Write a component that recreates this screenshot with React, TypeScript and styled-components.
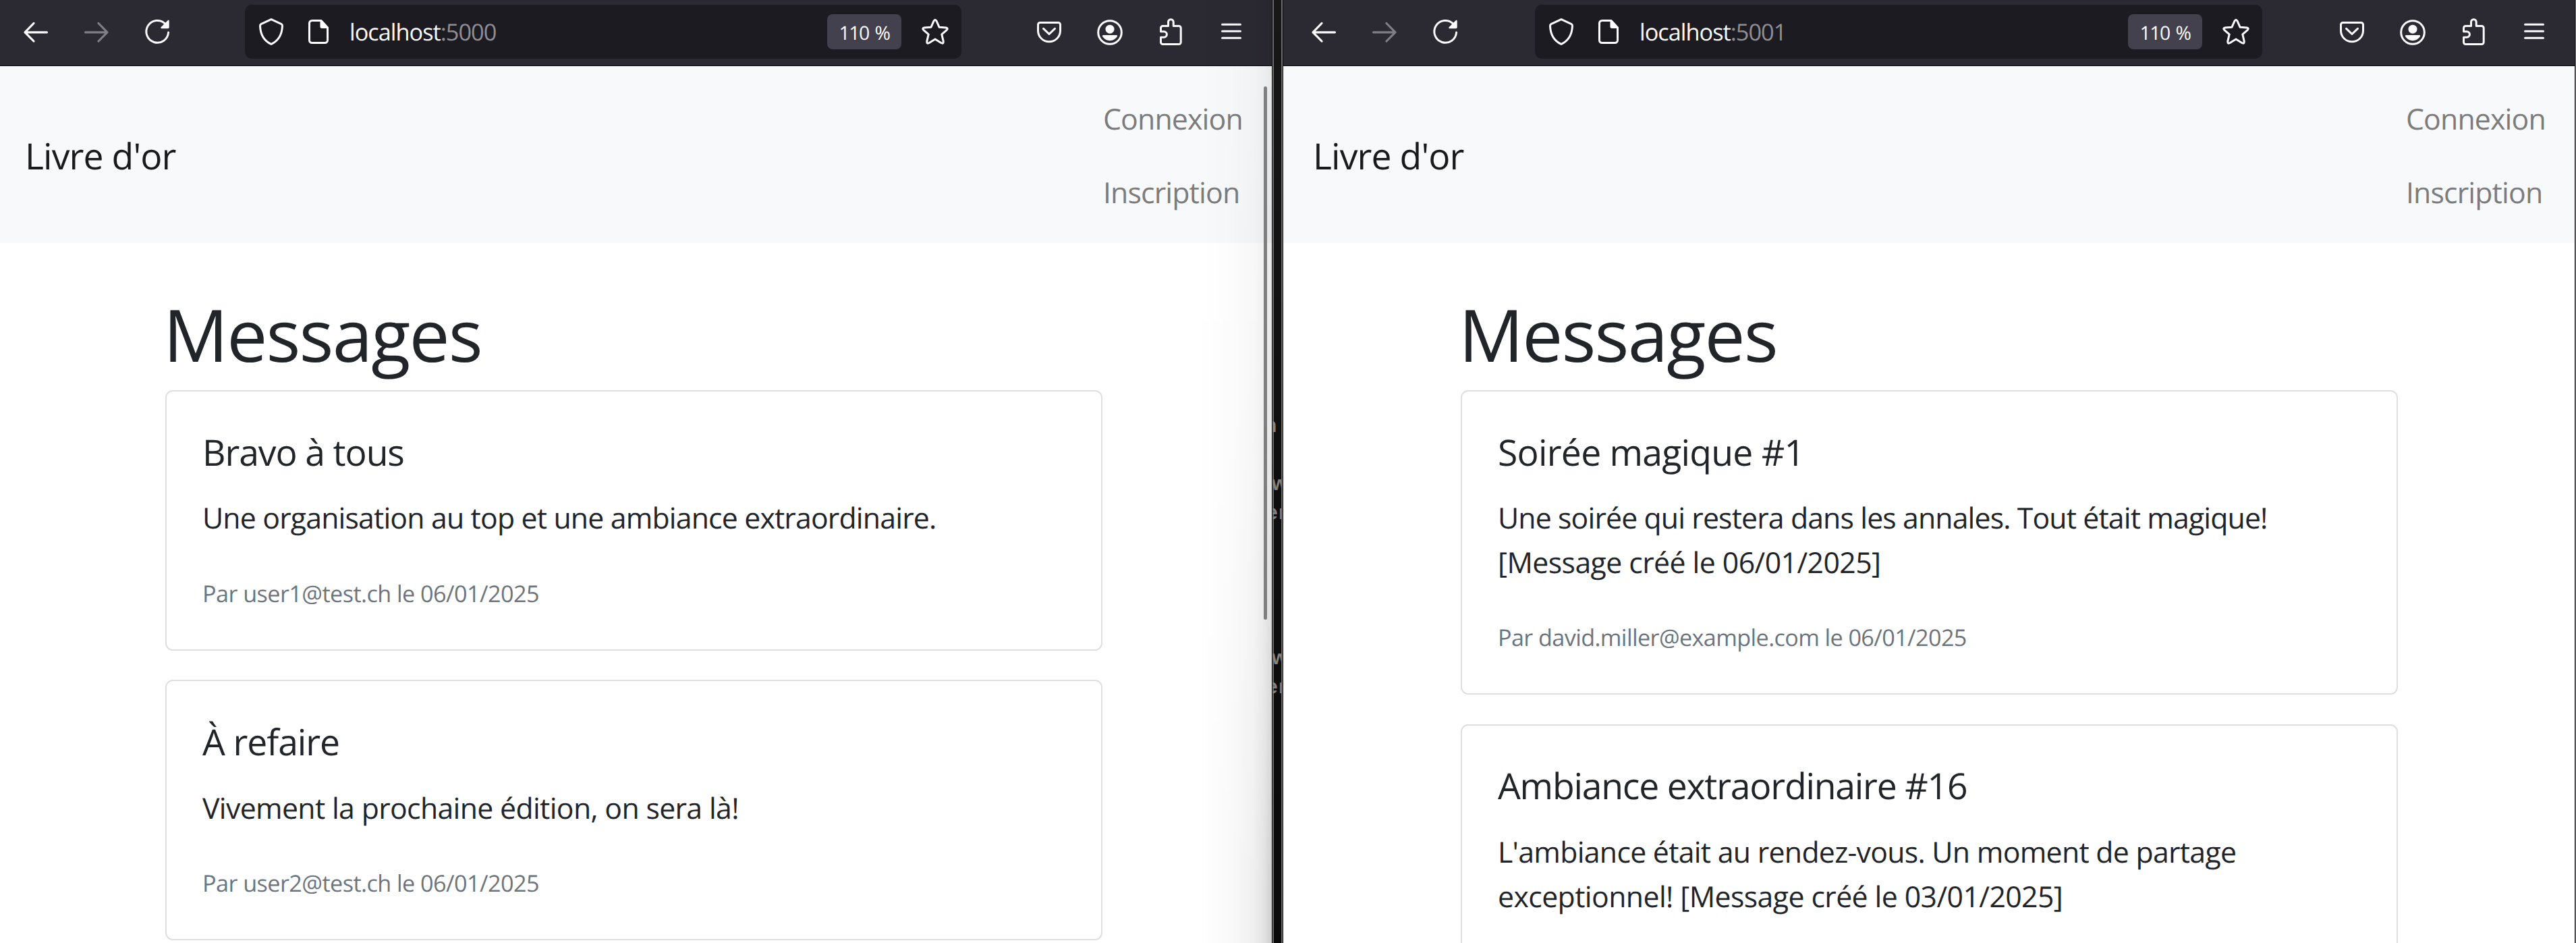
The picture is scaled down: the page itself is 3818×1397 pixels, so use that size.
import React from "react";
import styled, { createGlobalStyle } from "styled-components";

const GlobalStyle = createGlobalStyle`
  *, *::before, *::after { box-sizing: border-box; }
  body {
    margin: 0;
    background: #fff;
    color: #212529;
    font-family: "Open Sans", "Noto Sans", sans-serif;
    text-rendering: geometricPrecision;
  }
  h1, h5, p { margin: 0; font-weight: 400; }
`;

const Desktop = styled.div`
  display: flex;
  width: 3818px;
  height: 1397px;
  overflow: hidden;
  background: #0d0d0d;
`;

const Window = styled.section<{ $width: number }>`
  position: relative;
  flex: none;
  display: flex;
  flex-direction: column;
  width: ${(p) => p.$width}px;
  height: 1397px;
  overflow: hidden;
  background: #fff;
`;

/* Browser toolbar */

const Toolbar = styled.div<{ $start: number }>`
  flex: none;
  display: flex;
  align-items: center;
  height: 98px;
  padding: 0 15px 3px ${(p) => p.$start}px;
  background: #2b2a33;
  border-bottom: 1px solid #0c0c0d;
  color: #fbfbfe;
`;

const ToolButton = styled.span<{ $dim?: boolean }>`
  flex: none;
  display: flex;
  justify-content: center;
  width: 90px;
  opacity: ${(p) => (p.$dim ? 0.4 : 1)};
`;

const UrlBar = styled.div<{ $gap: number }>`
  flex: 1;
  display: flex;
  align-items: center;
  height: 80px;
  margin: 0 ${(p) => p.$gap}px;
  padding: 0 19px;
  border-radius: 10px;
  background: #1c1b22;
`;

const DocIcon = styled.span`
  display: flex;
  margin: 0 26px 0 30px;
`;

const Address = styled.span`
  flex: 1;
  padding-top: 2px;
  font-size: 34.3px;
  line-height: 48px;
  letter-spacing: -0.99px;
  white-space: nowrap;
`;

const Port = styled.span`
  color: #8f8e94;
`;

const ZoomChip = styled.span`
  display: flex;
  align-items: center;
  justify-content: center;
  width: 110px;
  height: 52px;
  margin-right: 30px;
  padding-top: 3px;
  border-radius: 8px;
  background: #42414d;
  font-size: 28.4px;
  line-height: 40px;
  letter-spacing: -1.5px;
  word-spacing: 3px;
  white-space: nowrap;
`;

const Glyph = styled.svg`
  display: block;
  width: 40px;
  height: 40px;
  overflow: visible;
  fill: none;
  stroke: currentColor;
  stroke-width: 3;
  stroke-linecap: round;
  stroke-linejoin: round;
`;

/* Guestbook page */

const Navbar = styled.nav<{ $start: number }>`
  flex: none;
  display: flex;
  align-items: center;
  justify-content: space-between;
  height: 262px;
  padding-left: ${(p) => p.$start}px;
  background: #f8f9fa;
`;

const Brand = styled.a`
  padding-top: 3px;
  font-size: 53.5px;
  line-height: 82px;
  letter-spacing: -0.89px;
  color: #191a1b;
  white-space: nowrap;
`;

const NavLinks = styled.div`
  display: flex;
  flex-direction: column;
  width: 250px;
`;

const NavItem = styled.a`
  height: 109.2px;
  padding-top: 23px;
  font-size: 42.8px;
  line-height: 65.5px;
  letter-spacing: -0.85px;
  color: #7c7c7d;
  white-space: nowrap;
`;

const Container = styled.main<{ $start: number }>`
  display: flex;
  flex-direction: column;
  width: 1389px;
  margin-left: ${(p) => p.$start}px;
  padding-top: 65px;
`;

const Heading = styled.h1`
  height: 153px;
  margin-left: -3px;
  padding-top: 5px;
  font-size: 107px;
  line-height: 131px;
  letter-spacing: -1.9px;
`;

const Card = styled.article`
  flex: none;
  margin-bottom: 43.4px;
  padding: 54.6px 53px;
  border: 2px solid #dfdfdf;
  border-radius: 11px;
  background: #fff;
`;

const CardTitle = styled.h5<{ $track: number }>`
  height: 65.5px;
  margin-bottom: 32.7px;
  padding-top: 2px;
  font-size: 53.5px;
  line-height: 65.5px;
  letter-spacing: ${(p) => p.$track}px;
  white-space: nowrap;
`;

const CardText = styled.p`
  margin-bottom: 42.1px;
  padding-top: 1.5px;
  font-size: 42.8px;
  line-height: 65.5px;
`;

const Line = styled.span<{ $track: number }>`
  display: block;
  letter-spacing: ${(p) => p.$track}px;
  white-space: nowrap;
`;

const Byline = styled.p<{ $track: number }>`
  height: 65.5px;
  padding-top: 5px;
  font-size: 34.2px;
  line-height: 65.5px;
  letter-spacing: ${(p) => p.$track}px;
  color: #6c757d;
  white-space: nowrap;
`;

/* Things floating over the left window */

const EdgeShadow = styled.div`
  position: absolute;
  top: 0;
  right: 0;
  width: 110px;
  height: 100%;
  background: linear-gradient(
    to left,
    rgba(0, 0, 0, 0.19) 0,
    rgba(0, 0, 0, 0.11) 12px,
    rgba(0, 0, 0, 0.06) 28px,
    rgba(0, 0, 0, 0.025) 60px,
    rgba(0, 0, 0, 0) 108px
  );
  mask-image: linear-gradient(to bottom, rgba(0, 0, 0, 0.35), rgba(0, 0, 0, 0.55) 45%, #000 95%);
`;

const ScrollThumb = styled.div`
  position: absolute;
  top: 128px;
  right: 7px;
  width: 5px;
  height: 790px;
  border-radius: 3px;
  background: #7f7f7f;
`;

/* Strip of the terminal visible between both windows */

const Gap = styled.div`
  position: relative;
  flex: none;
  width: 17px;
  height: 1397px;
  overflow: hidden;
  background: linear-gradient(#181818, #0f0f0f 45%, #0a0a0a);
  border: solid #0a0a0a;
  border-width: 0 1px;

  &::before,
  &::after {
    content: "";
    position: absolute;
    top: 0;
    bottom: 0;
    width: 2px;
    background: #6c6b69;
  }
  &::before { left: 0; }
  &::after { right: 0; }
`;

const TerminalText = styled.span<{ $x: number; $y: number }>`
  position: absolute;
  left: ${(p) => p.$x}px;
  top: ${(p) => p.$y}px;
  font: 700 30px/34px "Liberation Sans", sans-serif;
  color: #85827f;
  white-space: pre;
`;

const ScreenEdge = styled.div`
  flex: none;
  width: 2px;
  height: 1397px;
  background: #1a1a1a;
  border-right: 1px solid #77767a;
`;

const BackIcon = () => (
  <Glyph viewBox="0 0 40 40">
    <path d="M36.5 20.8H4M17 7.5 4 20.8 17 34" strokeWidth="3.2" />
  </Glyph>
);
const ForwardIcon = () => (
  <Glyph viewBox="0 0 40 40">
    <path d="M3.5 20.8H36M23 7.5 36 20.8 23 34" strokeWidth="3.2" />
  </Glyph>
);
const ReloadIcon = () => (
  <Glyph viewBox="0 0 40 40">
    <path d="M36.6 21A16.4 16.4 0 1 1 31.8 8.2" />
    <path d="M37.7 4v9.6a1.6 1.6 0 0 1-1.6 1.6h-9.6c-1.2 0-1.7-1.2-.9-2L35.7 3.2c.8-.8 2-.3 2 .8z" fill="currentColor" stroke="none" />
  </Glyph>
);
const ShieldIcon = () => (
  <Glyph viewBox="0 0 40 40">
    <path d="M20 1.7 5 8.6Q3.4 9.4 3.5 11.3C4 24 9.5 33.6 20 38.4 30.5 33.6 36 24 36.5 11.3Q36.6 9.4 35 8.6Z" />
  </Glyph>
);
const PageIcon = () => (
  <Glyph viewBox="0 0 40 40">
    <path d="M24 3.5H10.5a4 4 0 0 0-4 4v25a4 4 0 0 0 4 4h19a4 4 0 0 0 4-4V14Z" />
    <path d="M22.5 3h2.5L35 13.5V15H25a2.5 2.5 0 0 1-2.5-2.5z" fill="currentColor" stroke="none" />
  </Glyph>
);
const StarIcon = () => (
  <Glyph viewBox="0 0 40 40">
    <path d="M18 4Q20 1.2 22 4L26 13.2 36 14Q39.7 14.8 37.3 17.3L29.8 23.8 32.2 34.2Q32.5 38.5 28.8 36.5L20 31 11.2 36.5Q7.5 38.5 7.8 34.2L10.2 23.8 2.7 17.3Q.3 14.8 4 14L14 13.2Z" />
  </Glyph>
);
const PocketIcon = () => (
  <Glyph viewBox="0 0 40 40">
    <path d="M6.5 6.5h27a3 3 0 0 1 3 3V18.5a16.5 16.3 0 0 1-33 0V9.5a3 3 0 0 1 3-3z" />
    <path d="M11.5 15.3 20 23.5 28.5 15.3" />
  </Glyph>
);
const AccountIcon = () => (
  <Glyph viewBox="0 0 40 40">
    <circle cx="20" cy="21" r="17.3" />
    <circle cx="20" cy="16.2" r="6.5" fill="currentColor" stroke="none" />
    <path d="M10.2 25h19.6c1.2 0 1.8 1 1.1 2-2.3 3.7-6.3 6.2-10.9 6.2S11.4 30.7 9.1 27c-.7-1 0-2 1.1-2z" fill="currentColor" stroke="none" />
  </Glyph>
);
const PuzzleIcon = () => (
  <Glyph viewBox="0 0 40 40">
    <path d="M8.5 11.5h8V5.5a3.85 3.85 0 0 1 7.7 0v6H32.2a3 3 0 0 1 3 3V35.5a3 3 0 0 1-3 3H8.5a3 3 0 0 1-3-3V28.3h4.6a4.3 4.3 0 0 0 0-8.6H5.5V14.5a3 3 0 0 1 3-3z" />
  </Glyph>
);
const MenuIcon = () => (
  <Glyph viewBox="0 0 40 40">
    <path d="M6.5 9.2h27M6.5 19.2h27M6.5 29.2h27" />
  </Glyph>
);

type Text = { text: string; track: number };
type Message = { title: Text; lines: Text[]; by?: Text };

const leftMessages: Message[] = [
  {
    title: { text: "Bravo à tous", track: -1.12 },
    lines: [{ text: "Une organisation au top et une ambiance extraordinaire.", track: -0.84 }],
    by: { text: "Par user1@test.ch le 06/01/2025", track: -0.56 },
  },
  {
    title: { text: "À refaire", track: -1.09 },
    lines: [{ text: "Vivement la prochaine édition, on sera là!", track: -0.67 }],
    by: { text: "Par user2@test.ch le 06/01/2025", track: -0.56 },
  },
];

const rightMessages: Message[] = [
  {
    title: { text: "Soirée magique #1", track: -0.76 },
    lines: [
      { text: "Une soirée qui restera dans les annales. Tout était magique!", track: -0.88 },
      { text: "[Message créé le 06/01/2025]", track: -0.58 },
    ],
    by: { text: "Par david.miller@example.com le 06/01/2025", track: -0.61 },
  },
  {
    title: { text: "Ambiance extraordinaire #16", track: -1.22 },
    lines: [
      { text: "L'ambiance était au rendez-vous. Un moment de partage", track: -0.72 },
      { text: "exceptionnel! [Message créé le 03/01/2025]", track: -0.6 },
    ],
  },
];

type BrowserProps = {
  width: number;
  port: string;
  toolbarStart: number;
  urlGap: number;
  navStart: number;
  contentStart: number;
  messages: Message[];
  children?: React.ReactNode;
};

function Browser({ width, port, toolbarStart, urlGap, navStart, contentStart, messages, children }: BrowserProps) {
  return (
    <Window $width={width}>
      <Toolbar $start={toolbarStart}>
        <ToolButton><BackIcon /></ToolButton>
        <ToolButton $dim><ForwardIcon /></ToolButton>
        <ToolButton><ReloadIcon /></ToolButton>
        <UrlBar $gap={urlGap}>
          <ShieldIcon />
          <DocIcon><PageIcon /></DocIcon>
          <Address>localhost<Port>:{port}</Port></Address>
          <ZoomChip>110 %</ZoomChip>
          <StarIcon />
        </UrlBar>
        <ToolButton><PocketIcon /></ToolButton>
        <ToolButton><AccountIcon /></ToolButton>
        <ToolButton><PuzzleIcon /></ToolButton>
        <ToolButton><MenuIcon /></ToolButton>
      </Toolbar>
      <Navbar $start={navStart}>
        <Brand>Livre d'or</Brand>
        <NavLinks>
          <NavItem>Connexion</NavItem>
          <NavItem>Inscription</NavItem>
        </NavLinks>
      </Navbar>
      <Container $start={contentStart}>
        <Heading>Messages</Heading>
        {messages.map((m) => (
          <Card key={m.title.text}>
            <CardTitle $track={m.title.track}>{m.title.text}</CardTitle>
            <CardText>
              {m.lines.map((l) => (
                <Line key={l.text} $track={l.track}>{l.text}</Line>
              ))}
            </CardText>
            {m.by && <Byline $track={m.by.track}>{m.by.text}</Byline>}
          </Card>
        ))}
      </Container>
      {children}
    </Window>
  );
}

export default function App() {
  return (
    <>
      <GlobalStyle />
      <Desktop>
        <Browser
          width={1885}
          port="5000"
          toolbarStart={8}
          urlGap={85}
          navStart={37}
          contentStart={245}
          messages={leftMessages}
        >
          <EdgeShadow />
          <ScrollThumb />
        </Browser>
        <Gap>
          <TerminalText $x={-12} $y={614}>n</TerminalText>
          <TerminalText $x={-1} $y={700}>w</TerminalText>
          <TerminalText $x={-9} $y={743}>e</TerminalText>
          <TerminalText $x={9} $y={743}>r</TerminalText>
          <TerminalText $x={-1} $y={958}>w</TerminalText>
          <TerminalText $x={-9} $y={1001}>e</TerminalText>
          <TerminalText $x={9} $y={1001}>r</TerminalText>
        </Gap>
        <Browser
          width={1914}
          port="5001"
          toolbarStart={15}
          urlGap={88}
          navStart={44}
          contentStart={263}
          messages={rightMessages}
        />
        <ScreenEdge />
      </Desktop>
    </>
  );
}
